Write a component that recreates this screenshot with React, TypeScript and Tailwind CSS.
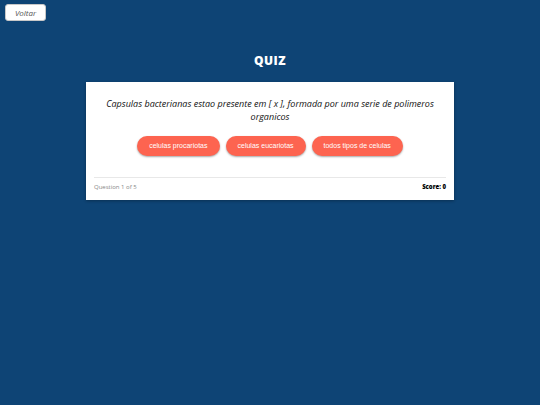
import React from 'react';

const answers = ['celulas procariotas', 'celulas eucariotas', 'todos tipos de celulas'];

const App: React.FC = () => {
  return (
    <div className="min-h-[405px] w-full bg-[#0e4475] font-['Open_Sans',sans-serif]">
      <div className="flex px-[5px] pt-[4px]">
        <button className="h-[17px] w-[41px] rounded-[3px] border border-[#c8c8c8] bg-white text-[8px] italic leading-[15px] text-[#555]">
          Voltar
        </button>
      </div>

      <h1 className="mt-[32px] text-center text-[12px] font-extrabold leading-[16px] tracking-[0.5px] text-white">
        QUIZ
      </h1>

      <div className="mx-auto mt-[13px] w-[368px] bg-white px-[8px] pt-[15px] pb-[8px] shadow-[0_1px_3px_rgba(0,0,0,0.3)]">
        <p className="px-[10px] text-center text-[9px] italic leading-[13px] text-[#111]">
          Capsulas bacterianas estao presente em [ x ], formada por uma serie de polimeros organicos
        </p>

        <div className="mt-[13px] flex justify-center gap-[6px]">
          {answers.map((a) => (
            <button
              key={a}
              className="h-[20px] rounded-full bg-[#fd6450] px-[12px] font-['Liberation_Sans',Arial,sans-serif] text-[7px] text-white shadow-[0_1px_2px_rgba(0,0,0,0.35)]"
            >
              {a}
            </button>
          ))}
        </div>

        <div className="mt-[21px] border-t border-[#e8e8e8] pt-[5px]">
          <div className="flex items-center justify-between text-[6px] leading-[9px]">
            <span className="text-[#888]">Question 1 of 5</span>
            <span className="font-extrabold text-black">Score: 0</span>
          </div>
        </div>
      </div>
    </div>
  );
};

export default App;
